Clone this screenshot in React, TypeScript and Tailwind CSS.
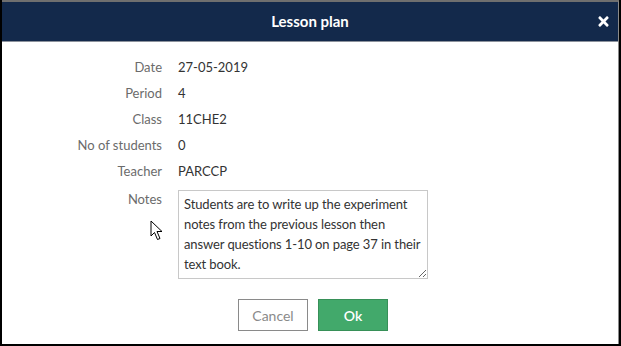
import React from 'react';
import { FaTimes } from 'react-icons/fa';

const DETAILS: [string, string][] = [
  ['Date', '27-05-2019'],
  ['Period', '4'],
  ['Class', '11CHE2'],
  ['No of students', '0'],
  ['Teacher', 'PARCCP'],
];

const NOTES =
  'Students are to write up the experiment notes from the previous lesson then answer questions 1-10 on page 37 in their text book.';

function App() {
  return (
    <div className="w-[621px] h-[346px] bg-black pl-[2px] pr-[2px] pb-[2px] flex flex-col font-['Lato',sans-serif]">
      <div className="flex-1 flex flex-col bg-white border-t-2 border-t-[#6f6f6f] border-r border-r-[#8a8a8a] relative">
        {/* Header */}
        <div className="h-[40px] bg-[#13294b] border-b border-b-[#8c929c] flex items-center justify-center relative">
          <span className="text-white text-[15px] font-bold">Lesson plan</span>
          <button className="absolute right-[7px] top-[12px] text-white">
            <FaTimes size={15} />
          </button>
        </div>

        {/* Body */}
        <div className="pt-[13px] flex flex-col">
          {DETAILS.map(([label, value]) => (
            <div key={label} className="h-[26px] flex items-center text-[13px]">
              <span className="w-[160px] text-right text-[#6b6b6b]">{label}</span>
              <span className="ml-[16px] text-[#333]">{value}</span>
            </div>
          ))}

          <div className="mt-[5px] flex items-start text-[13px]">
            <span className="w-[160px] text-right text-[#6b6b6b] leading-[18px]">Notes</span>
            <textarea
              className="ml-[16px] w-[250px] h-[89px] border border-[#c8c8c8] pl-[5px] pr-0 py-[3px] text-[13px] leading-[20px] tracking-[-0.1px] text-[#333] resize-y outline-none overflow-hidden"
              defaultValue={NOTES}
            />
          </div>

          <div className="mt-[20px] flex justify-center gap-[10px] pl-[6px]">
            <button className="w-[70px] h-[32px] border border-[#8a8a8a] bg-white text-[14px] text-[#8a8a8a]">
              Cancel
            </button>
            <button className="w-[70px] h-[32px] border border-[#379058] bg-[#42a96b] text-[14px] font-semibold text-white">
              Ok
            </button>
          </div>
        </div>

        {/* Mouse cursor */}
        <svg
          className="absolute left-[148px] top-[218px]"
          width="14"
          height="22"
          viewBox="0 0 14 22"
        >
          <path
            d="M1 1 L1 16 L4.5 12.5 L7.5 19.5 L10 18.5 L7 11.5 L12 11.5 Z"
            fill="white"
            stroke="black"
            strokeWidth="1"
            strokeLinejoin="miter"
          />
        </svg>
      </div>
    </div>
  );
}

export default App;
